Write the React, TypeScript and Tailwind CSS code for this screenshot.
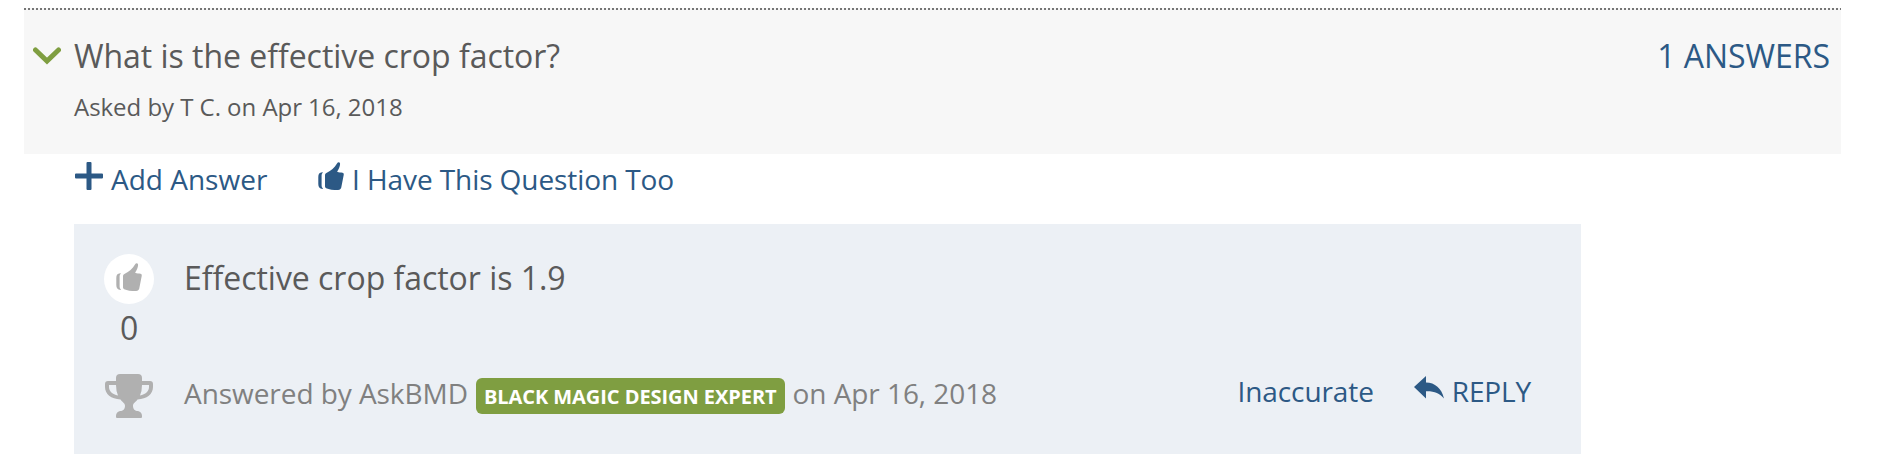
import React from "react";

function Thumb({ className }: { className: string }) {
  return (
    <svg viewBox="0 0 26 28" fill="currentColor" className={className}>
      <path d="M4.200 10.200C1.400 10.400 0.300 12 0.300 15v7c0 3 1.200 4.800 4.200 5l.5-.8C3.800 25.600 3.600 24.500 3.600 23V14c0-1.600.2-2.600 1.400-3.300z" />
      <path d="M7 13.500C7 12 7.600 11.400 8.800 10.800 13 8.500 16.500 5.500 19 1.400 19.800 0 21.600-.2 22 1.200c.4 2.600-1 5.600-2.900 8.600 1.900.9 3.900.5 5.400 1 1.100.3 1.400 1 1.200 2.200l-2.200 11.200c-.3 2.600-1.300 3.800-3.500 3.800-4.800 0-9-.4-11.800-1.800C7.300 25.700 7 25 7 24z" />
    </svg>
  );
}

export default function App() {
  return (
    <main className="h-[464px] w-full bg-white pt-2 pr-[37px] pl-6 font-['Open_Sans',sans-serif] text-[28px] leading-10 tracking-[-0.06px] whitespace-nowrap text-[#2c5985]">
      <section className="h-[146px] bg-[#f7f7f7]">
        <div className="h-0.5 bg-[repeating-linear-gradient(90deg,#767676_0_2px,transparent_2px_4px)]" />
        <div className="flex pt-6 pr-[11px] pl-[9px] text-[32px] leading-[44px] tracking-[-0.03px]">
          <svg viewBox="0 0 28 18" className="mt-[13px] mr-[13px] h-[18px] w-7" fill="none" stroke="#7f9e41" strokeWidth="5" strokeLinecap="round">
            <path d="M2.500 3 14 14 25.500 3" />
          </svg>
          <h2 className="grow text-[#5a5a5a]">What is the effective crop factor?</h2>
          <a>1 ANSWERS</a>
        </div>
        <p className="pt-3 pl-[50px] text-2xl leading-[33px] tracking-[-0.04px] text-[#5a5a5a]">Asked by T C. on Apr 16, 2018</p>
      </section>

      <nav className="flex h-[70px] pt-[5px] pl-[51px]">
        <a className="flex w-[243px]">
          <svg viewBox="0 0 28 28" className="mt-[3px] mr-2 h-7 w-7" fill="currentColor">
            <path d="M12.500 0h3a1 1 0 0 1 1 1v10.500H27a1 1 0 0 1 1 1v3a1 1 0 0 1-1 1H16.500V27a1 1 0 0 1-1 1h-3a1 1 0 0 1-1-1V16.500H1a1 1 0 0 1-1-1v-3a1 1 0 0 1 1-1h10.500V1a1 1 0 0 1 1-1z" />
          </svg>
          <span className="tracking-normal">Add Answer</span>
        </a>
        <a className="flex">
          <Thumb className="mt-[3px] mr-2 h-7 w-[26px]" />
          <span className="tracking-[-0.08px]">I Have This Question Too</span>
        </a>
      </nav>

      <article className="ml-[50px] flex h-[230px] w-[1507px] bg-[#ecf0f5] pl-[30px]">
        <div className="flex w-[50px] flex-col items-center pt-[30px]">
          <button className="flex size-[50px] items-center justify-center rounded-full bg-white pb-1 text-[#b0b0b0]">
            <Thumb className="h-7 w-[26px]" />
          </button>
          <span className="text-[32px] leading-[48px] text-[#5a5a5a]">0</span>
          <svg viewBox="0 0 48 44" className="mt-[22px] h-11 w-12 shrink-0 text-[#b0b0b0]" fill="currentColor">
            <path fillRule="evenodd" d="M15 0H33q4 0 4 4V7h8q3 0 3 3v3c0 7-6 12-15.500 12.500C30 29 28 29 28 32s2 5 5 5q4 1 4 5v1q0 1-1 1H12q-1 0-1-1v-1q0-4 4-5c3 0 5-2 5-5s-2-3-4.500-6.500C6 25 0 20 0 13v-3q0-3 3-3h8V4q0-4 4-4zM4 11v2c0 4 3.500 7.500 9 8.500Q11 17 11 11zM37 11q0 6-2 10.500c5.500-1 9-4.500 9-8.500v-2z" />
          </svg>
        </div>
        <div className="ml-[30px] flex grow flex-col">
          <p className="mt-8 text-[32px] leading-[44px] tracking-[-0.03px] text-[#5a5a5a]">Effective crop factor is 1.9</p>
          <div className="mt-[71px] flex pr-[50px]">
            <div className="mt-[2px] flex grow text-[#808080]">
              <span>Answered by AskBMD</span>
              <strong className="mr-2 ml-2 mt-[5px] h-9 rounded-md bg-[#7f9e41] px-2 text-xl leading-[38px] font-bold text-white">BLACK MAGIC DESIGN EXPERT</strong>
              <span>on Apr 16, 2018</span>
            </div>
            <a className="mr-10 tracking-[-0.1px]">Inaccurate</a>
            <a className="flex">
              <svg viewBox="0 0 30 23" className="mt-[5px] mr-2 h-[23px] w-[30px]" fill="currentColor">
                <path d="M0 11 12 0v6.500c9 .2 15.500 5.500 18 16-4.500-5.500-9.500-7.500-18-7.300v7.300z" />
              </svg>
              <span className="tracking-[-0.15px]">REPLY</span>
            </a>
          </div>
        </div>
      </article>
    </main>
  );
}
